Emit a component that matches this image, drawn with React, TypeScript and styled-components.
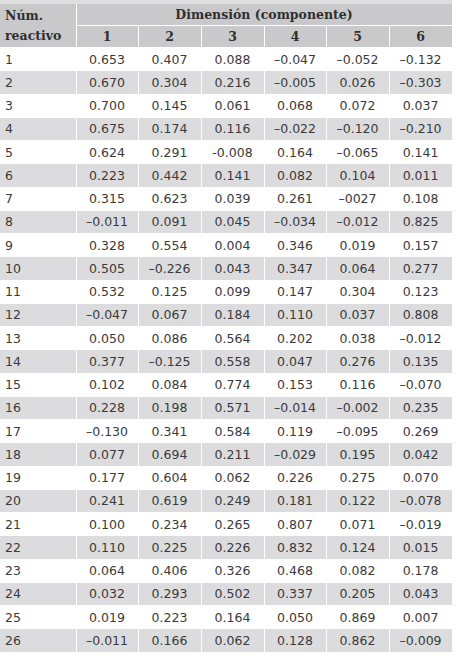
import styled, { createGlobalStyle } from 'styled-components'

const GlobalStyle = createGlobalStyle`
  html, body {
    margin: 0;
    padding: 0;
    background: #ffffff;
  }
`

const Page = styled.div`
  width: 452px;
  height: 660px;
  padding-top: 4px;
  box-sizing: border-box;
  overflow: hidden;
  background: linear-gradient(#dedede, #dedede) top / 100% 4px no-repeat, #ffffff;
`

const Table = styled.table`
  width: 452px;
  border-collapse: collapse;
  table-layout: fixed;
  font-family: "DejaVu Sans", Verdana, sans-serif;
  font-size: 12.5px;
  color: #3a3a3a;
`

const HeadCell = styled.th<{ $left?: boolean }>`
  background: #c9c9cb;
  font-family: "DejaVu Serif", "Liberation Serif", serif;
  font-weight: bold;
  font-size: 12.5px;
  color: #2f2f2f;
  text-align: ${(p) => (p.$left ? 'left' : 'center')};
  padding: 0 0 0 ${(p) => (p.$left ? '5px' : '0')};
  height: 21px;
  line-height: 21px;
  border: 1px solid #ffffff;
  border-top: 0;
`

const FirstHead = styled(HeadCell)`
  line-height: 20px;
  vertical-align: middle;
  border-left: 0;
`

const Row = styled.tr<{ $shade: boolean }>`
  background: ${(p) => (p.$shade ? '#dcdcde' : '#ffffff')};
`

const Cell = styled.td<{ $left?: boolean }>`
  height: 22.25px;
  padding: 0 0 0 ${(p) => (p.$left ? '5px' : '0')};
  text-align: ${(p) => (p.$left ? 'left' : 'center')};
  border: 1px solid #ffffff;
  border-left: ${(p) => (p.$left ? '0' : '1px solid #ffffff')};
  white-space: nowrap;
`

const data: string[][] = [
  ['0.653', '0.407', '0.088', '–0.047', '–0.052', '–0.132'],
  ['0.670', '0.304', '0.216', '–0.005', '0.026', '–0.303'],
  ['0.700', '0.145', '0.061', '0.068', '0.072', '0.037'],
  ['0.675', '0.174', '0.116', '–0.022', '–0.120', '–0.210'],
  ['0.624', '0.291', '-0.008', '0.164', '–0.065', '0.141'],
  ['0.223', '0.442', '0.141', '0.082', '0.104', '0.011'],
  ['0.315', '0.623', '0.039', '0.261', '–0027', '0.108'],
  ['–0.011', '0.091', '0.045', '–0.034', '–0.012', '0.825'],
  ['0.328', '0.554', '0.004', '0.346', '0.019', '0.157'],
  ['0.505', '–0.226', '0.043', '0.347', '0.064', '0.277'],
  ['0.532', '0.125', '0.099', '0.147', '0.304', '0.123'],
  ['–0.047', '0.067', '0.184', '0.110', '0.037', '0.808'],
  ['0.050', '0.086', '0.564', '0.202', '0.038', '–0.012'],
  ['0.377', '–0.125', '0.558', '0.047', '0.276', '0.135'],
  ['0.102', '0.084', '0.774', '0.153', '0.116', '–0.070'],
  ['0.228', '0.198', '0.571', '–0.014', '–0.002', '0.235'],
  ['–0.130', '0.341', '0.584', '0.119', '–0.095', '0.269'],
  ['0.077', '0.694', '0.211', '–0.029', '0.195', '0.042'],
  ['0.177', '0.604', '0.062', '0.226', '0.275', '0.070'],
  ['0.241', '0.619', '0.249', '0.181', '0.122', '–0.078'],
  ['0.100', '0.234', '0.265', '0.807', '0.071', '–0.019'],
  ['0.110', '0.225', '0.226', '0.832', '0.124', '0.015'],
  ['0.064', '0.406', '0.326', '0.468', '0.082', '0.178'],
  ['0.032', '0.293', '0.502', '0.337', '0.205', '0.043'],
  ['0.019', '0.223', '0.164', '0.050', '0.869', '0.007'],
  ['–0.011', '0.166', '0.062', '0.128', '0.862', '–0.009'],
]

const widths = [76, 62, 63, 63, 62, 63, 63]

export default function App() {
  return (
    <>
      <GlobalStyle />
      <Page>
        <Table>
          <colgroup>
            {widths.map((w, i) => (
              <col key={i} style={{ width: w }} />
            ))}
          </colgroup>
          <thead>
            <tr>
              <FirstHead rowSpan={2} $left>
                Núm.
                <br />
                reactivo
              </FirstHead>
              <HeadCell colSpan={6}>Dimensión (componente)</HeadCell>
            </tr>
            <tr>
              {[1, 2, 3, 4, 5, 6].map((n) => (
                <HeadCell key={n}>{n}</HeadCell>
              ))}
            </tr>
          </thead>
          <tbody>
            {data.map((row, i) => (
              <Row key={i} $shade={i % 2 === 1}>
                <Cell $left>{i + 1}</Cell>
                {row.map((v, j) => (
                  <Cell key={j}>{v}</Cell>
                ))}
              </Row>
            ))}
          </tbody>
        </Table>
      </Page>
    </>
  )
}
